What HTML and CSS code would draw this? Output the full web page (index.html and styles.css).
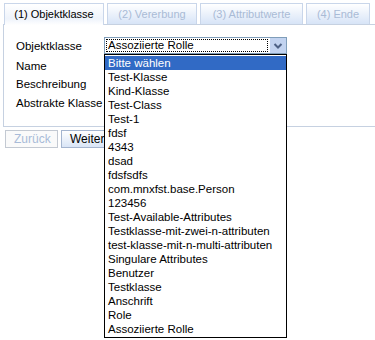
FILE: index.html
```html
<!doctype html>
<html lang="de">
<head>
  <meta charset="utf-8">
  <title>Neue Objektklasse</title>
  <link rel="stylesheet" href="styles.css">
</head>
<body>
  <div class="tabs">
    <div class="tab active">(1) Objektklasse</div>
    <div class="tab t2">(2) Vererbung</div>
    <div class="tab t3">(3) Attributwerte</div>
    <div class="tab t4">(4) Ende</div>
  </div>

  <div class="panel">
    <div class="form">
      <div class="label">Objektklasse</div>
      <div class="field">
        <div class="combo">
          <span class="combo-text">Assoziierte Rolle</span>
          <span class="combo-btn">
            <svg width="16" height="14" viewBox="0 0 16 14"><path d="M4.5 5 L8 8.5 L11.5 5" fill="none" stroke="#4d6185" stroke-width="2"/></svg>
          </span>
          <ul class="options">
            <li class="selected">Bitte wählen</li>
            <li>Test-Klasse</li>
            <li>Kind-Klasse</li>
            <li>Test-Class</li>
            <li>Test-1</li>
            <li>fdsf</li>
            <li>4343</li>
            <li>dsad</li>
            <li>fdsfsdfs</li>
            <li>com.mnxfst.base.Person</li>
            <li>123456</li>
            <li>Test-Available-Attributes</li>
            <li>Testklasse-mit-zwei-n-attributen</li>
            <li>test-klasse-mit-n-multi-attributen</li>
            <li>Singulare Attributes</li>
            <li>Benutzer</li>
            <li>Testklasse</li>
            <li>Anschrift</li>
            <li>Role</li>
            <li>Assoziierte Rolle</li>
          </ul>
        </div>
      </div>
      <div class="label">Name</div>
      <div class="field"></div>
      <div class="label">Beschreibung</div>
      <div class="field"></div>
      <div class="label">Abstrakte Klasse</div>
      <div class="field"></div>
    </div>
  </div>

  <div class="buttons">
    <button class="btn disabled">Zurück</button>
    <button class="btn">Weiter</button>
  </div>
</body>
</html>
```

FILE: styles.css
```css
html, body {
  height: 340px;
}
body {
  margin: 0;
  background-color: #fff;
  font-family: "Liberation Sans", Arial, sans-serif;
  font-size: 11px;
  color: #000;
}
.tabs {
  display: flex;
  gap: 3px;
  padding: 3px 0 0 4px;
  height: 21px;
}
.tab {
  box-sizing: border-box;
  height: 21px;
  border: 1px solid #c9d6ea;
  border-bottom: none;
  background: linear-gradient(#ffffff, #d7e4f7);
  color: #a9bbd6;
  text-align: center;
  line-height: 20px;
  font-size: 11px;
}
.tab.active {
  position: relative;
  z-index: 1;
  width: 100px;
  height: 22px;
  color: #000;
  background: linear-gradient(#ffffff, #eef3fb 70%, #ffffff);
}
.tab.t2 { width: 90px; }
.tab.t3 { width: 103px; }
.tab.t4 { width: 64px; }
.panel {
  margin-left: 3px;
  border: 1px solid #c6d1e1;
  border-right: none;
  padding: 12px 0 11px 12px;
}
.form {
  display: grid;
  grid-template-columns: 88px 1fr;
  grid-template-rows: 18px 22px 14px 24px;
}
.label {
  display: flex;
  align-items: center;
  font-size: 11.5px;
  white-space: nowrap;
}
.field {
  position: relative;
}
.combo {
  position: relative;
  box-sizing: border-box;
  width: 183px;
  height: 17px;
  border: 1px solid #7f9db9;
  display: flex;
  align-items: stretch;
  font-size: 11.5px;
}
.combo-text {
  flex: 1;
  margin: 1px;
  padding-left: 2px;
  outline: 1px dotted #000;
  outline-offset: -1px;
  line-height: 13px;
}
.combo-btn {
  width: 16px;
  background: #c2d3f0;
  border-left: 1px solid #fff;
  display: flex;
  align-items: center;
  justify-content: center;
}
.options {
  position: absolute;
  left: -1px;
  top: 16px;
  width: 183px;
  box-sizing: border-box;
  margin: 0;
  padding: 1px 0;
  list-style: none;
  background: #fff;
  border: 1px solid #000;
  z-index: 2;
}
.options li {
  height: 14px;
  line-height: 14px;
  padding-left: 3px;
  white-space: nowrap;
}
.options li.selected {
  background: #316ac5;
  color: #fff;
}
.buttons {
  display: flex;
  gap: 3px;
  padding: 3px 0 0 5px;
}
.btn {
  font-family: "Liberation Sans", Arial, sans-serif;
  font-size: 12px;
  height: 18px;
  padding: 0 8px;
  border: 1px solid #a4b5cf;
  background: linear-gradient(#ffffff, #d9e5f6);
  color: #000;
}
.btn.disabled {
  width: 53px;
  color: #a8bbd8;
  border-color: #c3c9d2;
  background: #fafafa;
}
```
